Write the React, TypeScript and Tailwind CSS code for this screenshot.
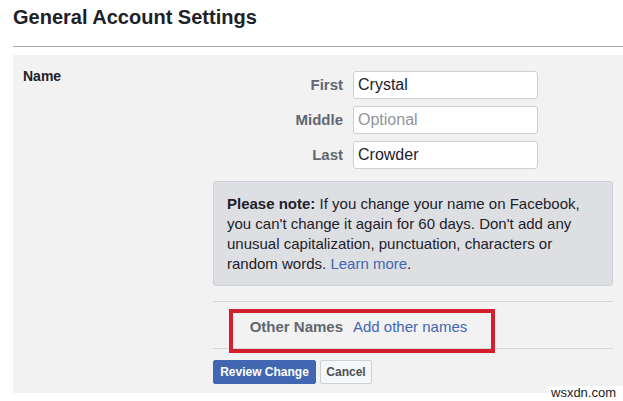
export default function App() {
  const rows = [
    { label: "First", value: "Crystal", placeholder: "" },
    { label: "Middle", value: "", placeholder: "Optional" },
    { label: "Last", value: "Crowder", placeholder: "" },
  ];

  return (
    <div className="relative w-[623px] h-[401px] overflow-hidden bg-white font-['Liberation_Sans',Arial,sans-serif] text-[#1d2129]">
      {/* Header */}
      <div className="ml-[13px] pt-[5px] h-[47px] border-b border-[#aaaaaa]">
        <h1 className="text-[20px] leading-[24px] font-bold text-[#1d2129]">General Account Settings</h1>
      </div>

      {/* Settings panel */}
      <div className="ml-[13px] mt-[8px] h-[338px] bg-[#f2f2f2] flex">
        <div className="w-[200px] pl-[10px] pt-[12px] text-[14px] leading-[18px] font-bold">Name</div>

        <div className="w-[400px] flex flex-col">
          <div className="pt-[16px] flex flex-col gap-[7px]">
            {rows.map((r) => (
              <div key={r.label} className="flex items-center">
                <label className="w-[130px] text-right text-[15px] font-bold text-[#606770]">{r.label}</label>
                <input
                  readOnly
                  value={r.value}
                  placeholder={r.placeholder}
                  className="ml-[10px] w-[185px] h-[28px] px-[4px] bg-white border border-[#ccd0d5] rounded-[3px] text-[16px] text-[#1d2129] placeholder:text-[#90949c] outline-none"
                />
              </div>
            ))}
          </div>

          <div className="mt-[12px] h-[105px] bg-[#dddfe2] border border-[#ccd0d5] rounded-[3px] px-[13px] pt-[12px] text-[15px] leading-[20px] text-[#1d2129]">
            <span className="font-bold">Please note:</span> If you change your name on Facebook, you can't change it again
            for 60 days. Don't add any unusual capitalization, punctuation, characters or random words.{" "}
            <span className="text-[#4267b2]">Learn more</span>.
          </div>

          <div className="mt-[15px] h-[48px] pt-[5px] border-t border-b border-[#d8d8d8] flex items-center">
            <span className="w-[130px] text-right text-[15px] font-bold text-[#606770]">Other Names</span>
            <span className="ml-[10px] text-[15px] text-[#4267b2]">Add other names</span>
          </div>

          <div className="mt-[11px] flex gap-[4px]">
            <button className="h-[24px] w-[103px] bg-[#4267b2] border border-[#4267b2] rounded-[2px] text-white text-[12px] font-bold">
              Review Change
            </button>
            <button className="h-[24px] w-[52px] bg-[#f5f6f7] border border-[#ccd0d5] rounded-[2px] text-[#4b4f56] text-[12px] font-bold">
              Cancel
            </button>
          </div>
        </div>
      </div>

      {/* Annotation highlight */}
      <div className="absolute left-[229px] top-[309px] w-[266px] h-[44px] border-[4px] border-[#d3202e]" />

      {/* Watermark */}
      <div className="absolute right-0 top-[386px] w-[75px] h-[15px] bg-white text-[13px] leading-[14px] text-[#222] pl-[3px]">
        wsxdn.com
      </div>
    </div>
  );
}
